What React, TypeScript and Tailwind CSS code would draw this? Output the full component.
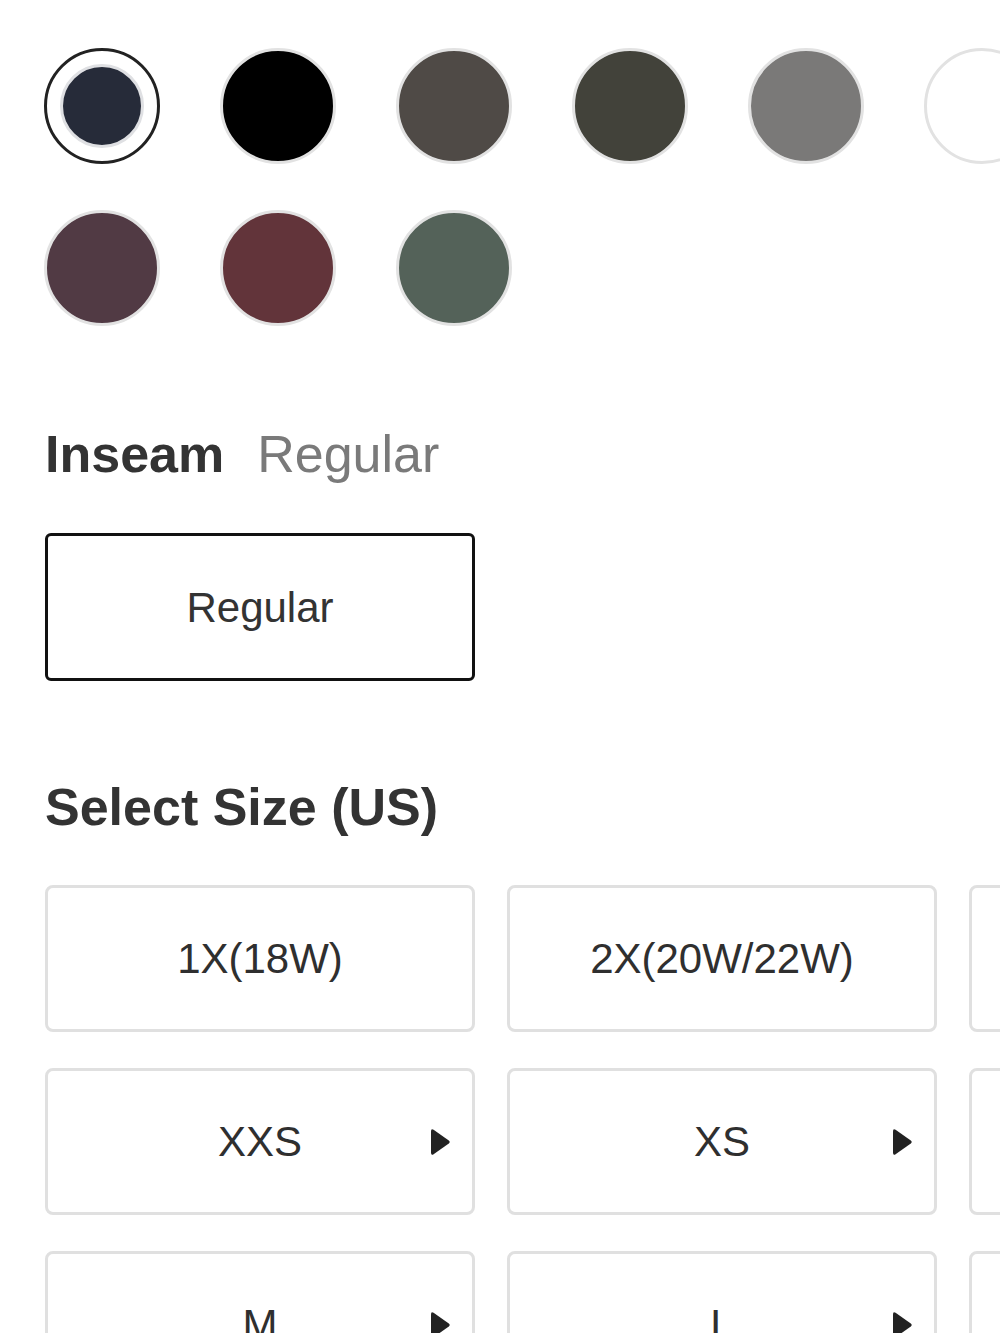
import React from "react";

const swatches: { color: string; selected?: boolean }[] = [
  { color: "#262b39", selected: true },
  { color: "#000000" },
  { color: "#4f4a46" },
  { color: "#42423a" },
  { color: "#7a7978" },
  { color: "#ffffff" },
  { color: "#513a44" },
  { color: "#62343a" },
  { color: "#546259" },
];

const sizes: { label: string; arrow: boolean }[] = [
  { label: "1X(18W)", arrow: false },
  { label: "2X(20W/22W)", arrow: false },
  { label: "3X(24W/26W)", arrow: false },
  { label: "XXS", arrow: true },
  { label: "XS", arrow: true },
  { label: "S", arrow: true },
  { label: "M", arrow: true },
  { label: "L", arrow: true },
  { label: "XL", arrow: true },
];

function Arrow() {
  return (
    <svg width="19" height="27" viewBox="0 0 19 27" className="absolute right-[22px] top-1/2 -translate-y-1/2">
      <path
        d="M2.6 1.2 Q0 -0.4 0 2.8 V24.2 Q0 27.4 2.6 25.8 L17.8 15 Q19.6 13.5 17.8 12 Z"
        fill="#222222"
      />
    </svg>
  );
}

export default function App() {
  return (
    <div
      className="w-[1000px] h-[1333px] overflow-hidden bg-white text-[#333333]"
      style={{ fontFamily: '"Liberation Sans", Arial, sans-serif' }}
    >
      <div className="flex flex-col pl-[45px] pt-[48px]">
        <div className="-ml-px grid grid-cols-[repeat(6,116px)] gap-x-[60px] gap-y-[46px] w-[1100px]">
          {swatches.map((s, i) =>
            s.selected ? (
              <div
                key={i}
                className="w-[116px] h-[116px] rounded-full border-[3px] border-[#222222] flex items-center justify-center"
              >
                <div
                  className="w-[84px] h-[84px] rounded-full border-[3px] border-[#dfe0e3]"
                  style={{ backgroundColor: s.color }}
                />
              </div>
            ) : (
              <div
                key={i}
                className="w-[116px] h-[116px] rounded-full border-[3px] border-[#e2e2e2]"
                style={{ backgroundColor: s.color }}
              />
            )
          )}
        </div>

        <div className="mt-[102px] flex items-baseline gap-[33px] text-[52px] leading-none">
          <span className="font-bold text-[#333333]">Inseam</span>
          <span className="text-[#7a7a7a]">Regular</span>
        </div>

        <button className="mt-[53px] w-[430px] h-[148px] rounded-[6px] border-[3px] border-[#111111] flex items-center justify-center text-[42px] text-[#333333] bg-white">
          Regular
        </button>

        <h2 className="mt-[100px] text-[52px] leading-none font-bold text-[#333333]">Select Size (US)</h2>

        <div className="mt-[52px] grid grid-cols-[repeat(3,430px)] gap-x-[32px] gap-y-[36px] w-[1400px]">
          {sizes.map((s) => (
            <div
              key={s.label}
              className="relative h-[147px] rounded-[8px] border-[3px] border-[#e0e0e0] flex items-center justify-center text-[42px] text-[#2f2f2f]"
            >
              <span>{s.label}</span>
              {s.arrow && <Arrow />}
            </div>
          ))}
        </div>
      </div>
    </div>
  );
}
